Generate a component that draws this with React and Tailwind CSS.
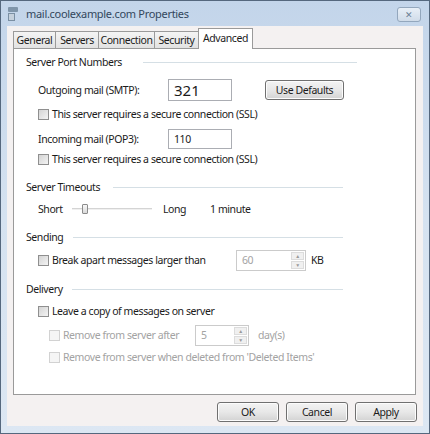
const font = { fontFamily: '"Noto Sans", "Open Sans", sans-serif' }

function Check({ disabled, label, className = '' }) {
  return (
    <label className={`flex items-center gap-[3px] h-[15px] ${disabled ? 'text-[#a3a3a3]' : 'text-[#1b1b1b]'} ${className}`}>
      <span
        className={`w-[11px] h-[11px] shrink-0 border ${
          disabled ? 'border-[#d2d2d2] bg-[#f5f5f5]' : 'border-[#8f8f8f] bg-gradient-to-br from-[#d4d4d4] to-[#f4f4f4]'
        }`}
      />
      <span>{label}</span>
    </label>
  )
}

function Group({ title, gap, end, children }) {
  return (
    <div>
      <div className="flex items-center h-[15px]" style={{ width: end }}>
        <span>{title}</span>
        <span className="flex-1 h-px bg-[#d5dfe5]" style={{ marginLeft: gap }} />
      </div>
      {children}
    </div>
  )
}

function Spin({ value, w }) {
  return (
    <div className={`flex h-[21px] border border-[#cbcbcb] bg-white ${w}`}>
      <span className="flex-1 pl-[5px] leading-[19px] text-[#a3a3a3]">{value}</span>
      <div className="flex flex-col w-[13px] my-[1px] mr-[1px] gap-px">
        <span className="flex-1 flex items-center justify-center text-[5px] leading-none text-[#9a9a9a] bg-[#f0f0f0] border border-[#dcdcdc]">▲</span>
        <span className="flex-1 flex items-center justify-center text-[5px] leading-none text-[#9a9a9a] bg-[#f0f0f0] border border-[#dcdcdc]">▼</span>
      </div>
    </div>
  )
}

function Btn({ children, w }) {
  return (
    <button className={`h-[20px] ${w} rounded-[3px] border border-[#707070] bg-gradient-to-b from-[#f3f3f3] via-[#e8e8e8] to-[#d3d3d3] text-[#1b1b1b] leading-none shadow-[inset_0_0_0_1px_#fcfcfc]`}>
      {children}
    </button>
  )
}

export default function App() {
  const tabs = [
    ['General', 'w-[43px]'],
    ['Servers', 'w-[43px]'],
    ['Connection', 'w-[56px]'],
    ['Security', 'w-[44px]'],
  ]
  return (
    <div
      className="w-[430px] h-[434px] flex flex-col border border-[#55687e] bg-gradient-to-b from-[#c3d5ea] via-[#d5e2f0] to-[#dce7f3] text-[10.5px] leading-[15px] tracking-[-0.42px] text-[#1b1b1b]"
      style={font}
    >
      {/* title bar */}
      <div className="h-[25px] flex items-center pl-[7px] pr-[8px] shrink-0">
        <div className="w-[10px] h-[14px] mr-[8px] flex flex-col gap-px">
          <span className="h-[5px] w-[10px] bg-[#7f95aa] rounded-[1px]" />
          <span className="h-[8px] w-[7px] bg-[#c4d0dc] border border-[#7a8fa3]" />
        </div>
        <span className="text-[11px] tracking-[-0.3px] text-[#33475c]">mail.coolexample.com Properties</span>
        <div className="ml-auto mt-[2px] w-[24px] h-[15px] rounded-[3px] border border-[#93a7bd] bg-gradient-to-b from-[#e8eff7] to-[#d0dce9] flex items-center justify-center text-[9px] leading-none tracking-normal text-[#6b7f94]">
          ✕
        </div>
      </div>

      {/* client */}
      <div className="flex-1 mx-[6px] mb-[7px] bg-[#f4f1f1] flex flex-col">
        {/* tabs */}
        <div className="flex items-end pl-[6px] h-[22px]">
          {tabs.map(([t, w]) => (
            <div
              key={t}
              className={`h-[17px] ${w} text-center border border-b-0 border-l-0 first:border-l border-[#9a9a9a] bg-gradient-to-b from-[#f4f4f4] to-[#e2e2e2] leading-[16px]`}
            >
              {t}
            </div>
          ))}
          <div className="h-[21px] w-[55px] text-center border border-b-0 border-[#9a9a9a] bg-white leading-[19px] relative top-px z-10 -ml-px">
            Advanced
          </div>
        </div>

        {/* panel */}
        <div className="ml-[6px] w-[403px] h-[347px] border border-[#9a9a9a] bg-white pl-[12px] pt-[6px]">
          <Group title="Server Port Numbers" gap={21} end={331}>
            <div className="pl-[12px]">
              <div className="flex items-center mt-[9px] h-[22px]">
                <span className="w-[130px]">Outgoing mail (SMTP):</span>
                <div className="w-[64px] h-[22px] border border-[#abadb3] bg-white pl-[5px] text-[15px] leading-[20px] tracking-normal">321</div>
                <div className="ml-[33px]">
                  <Btn w="w-[79px]">Use Defaults</Btn>
                </div>
              </div>
              <Check className="mt-[6px]" label="This server requires a secure connection (SSL)" />
              <div className="flex items-center mt-[7px] h-[20px]">
                <span className="w-[130px]">Incoming mail (POP3):</span>
                <div className="w-[64px] h-[20px] border border-[#abadb3] bg-white pl-[5px] leading-[18px]">110</div>
              </div>
              <Check className="mt-[3px]" label="This server requires a secure connection (SSL)" />
            </div>
          </Group>

          <div className="mt-[13px]">
            <Group title="Server Timeouts" gap={13} end={317}>
              <div className="flex items-center pl-[12px] mt-[4px] h-[20px]">
                <span className="w-[34px]">Short</span>
                <div className="relative w-[80px] h-[14px] flex items-center">
                  <span className="w-full h-[2px] bg-[#d4d4d4] border-b border-[#f0f0f0]" />
                  <span className="absolute left-[10px] top-[2px] w-[6px] h-[10px] border border-[#8c8c8c] rounded-[1px] bg-gradient-to-b from-[#f7f7f7] to-[#dadada]" />
                </div>
                <span className="ml-[11px] w-[47px]">Long</span>
                <span>1 minute</span>
              </div>
            </Group>
          </div>

          <div className="mt-[11px]">
            <Group title="Sending" gap={10} end={317}>
              <div className="flex items-center pl-[12px] mt-[5px] h-[21px]">
                <div className="w-[198px]">
                  <Check label="Break apart messages larger than" />
                </div>
                <Spin value="60" w="w-[70px]" />
                <span className="ml-[5px]">KB</span>
              </div>
            </Group>
          </div>

          <div className="mt-[11px]">
            <Group title="Delivery" gap={9} end={317}>
              <div className="pl-[12px]">
                <Check className="mt-[7px]" label="Leave a copy of messages on server" />
                <div className="pl-[11px]">
                  <div className="flex items-center mt-[6px] h-[21px]">
                    <div className="w-[146px]">
                      <Check disabled label="Remove from server after" />
                    </div>
                    <Spin value="5" w="w-[54px]" />
                    <span className="ml-[9px] text-[#a3a3a3]">day(s)</span>
                  </div>
                  <Check className="mt-[4px]" disabled label="Remove from server when deleted from 'Deleted Items'" />
                </div>
              </div>
            </Group>
          </div>
        </div>

        {/* buttons */}
        <div className="flex justify-end gap-[7px] pr-[6px] mt-[7px]">
          <Btn w="w-[62px]">OK</Btn>
          <Btn w="w-[62px]">Cancel</Btn>
          <Btn w="w-[62px]">Apply</Btn>
        </div>
      </div>
    </div>
  )
}
